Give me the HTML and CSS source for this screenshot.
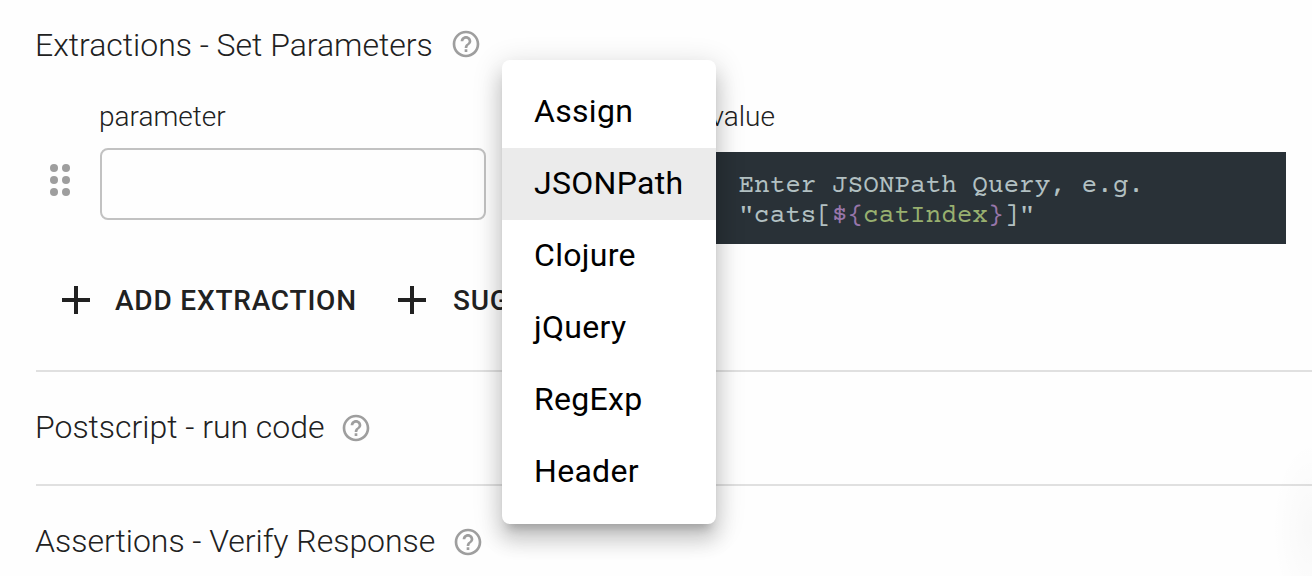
FILE: index.html
```html
<!DOCTYPE html>
<html lang="en">
<head>
<meta charset="utf-8">
<title>Extractions</title>
<link rel="stylesheet" href="styles.css">
</head>
<body>
<svg class="defs" aria-hidden="true">
  <symbol id="help" viewBox="0 0 24 24"><path d="M11 18h2v-2h-2v2zm1-16C6.480 2 2 6.480 2 12s4.480 10 10 10 10-4.480 10-10S17.520 2 12 2zm0 18c-4.410 0-8-3.590-8-8s3.590-8 8-8 8 3.590 8 8-3.590 8-8 8zm0-14c-2.210 0-4 1.790-4 4h2c0-1.100.9-2 2-2s2 .9 2 2c0 2-3 1.750-3 5h2c0-2.250 3-2.500 3-5 0-2.210-1.790-4-4-4z"/></symbol>
  <symbol id="plus" viewBox="0 0 28 28"><path d="M12 0h4v12h12v4H16v12h-4V16H0v-4h12z"/></symbol>
</svg>
<main class="page">
  <section class="section extractions">
    <h2 class="title"><span class="title-text w-extractions">Extractions - Set Parameters</span><svg class="help"><use href="#help"/></svg></h2>
    <div class="grid">
      <span class="label label-param">parameter</span>
      <span class="label label-value">value</span>
      <svg class="drag" viewBox="0 0 20 32"><circle cx="4" cy="4" r="4"/><circle cx="16" cy="4" r="4"/><circle cx="4" cy="16" r="4"/><circle cx="16" cy="16" r="4"/><circle cx="4" cy="28" r="4"/><circle cx="16" cy="28" r="4"/></svg>
      <input class="field" type="text" aria-label="parameter">
      <div class="editor"><div>Enter JSONPath Query, e.g.</div><div>"cats[<span class="brace">${</span><span class="var">catIndex</span><span class="brace">}</span>]"</div></div>
    </div>
    <div class="actions">
      <button class="action add"><svg class="plus"><use href="#plus"/></svg>ADD EXTRACTION</button>
      <button class="action suggest"><svg class="plus"><use href="#plus"/></svg>SUG</button>
    </div>
  </section>
  <section class="section">
    <h2 class="title"><span class="title-text w-postscript">Postscript - run code</span><svg class="help"><use href="#help"/></svg></h2>
  </section>
  <section class="section">
    <h2 class="title"><span class="title-text w-assertions">Assertions - Verify Response</span><svg class="help"><use href="#help"/></svg></h2>
  </section>
</main>
<ul class="menu">
  <li class="item">Assign</li>
  <li class="item selected">JSONPath</li>
  <li class="item">Clojure</li>
  <li class="item">jQuery</li>
  <li class="item">RegExp</li>
  <li class="item">Header</li>
</ul>
<div class="glow"></div>
</body>
</html>
```
FILE: styles.css
```css
* { box-sizing: border-box; }
body {
  margin: 0;
  height: 576px;
  overflow: hidden;
  position: relative;
  background: #fefefe;
  color: #212121;
  font-family: Roboto, sans-serif;
}
.defs { display: none; }
.page { padding-left: 36px; }
.section { height: 114px; border-bottom: 2px solid #e0e0e0; padding-top: 32px; }
.section:last-child { border-bottom: 0; }
.extractions { height: 372px; padding-top: 20px; }
.title {
  margin: 0;
  display: flex;
  align-items: center;
  height: 48px;
  font-size: 32px;
  font-weight: 300;
  line-height: 48px;
  letter-spacing: -0.02px;
  white-space: nowrap;
}
.title-text { flex: none; height: 50px; margin-left: -1px; }
.extractions .title-text { height: 46px; }
.w-extractions { width: 415px; }
.w-postscript { width: 305px; }
.w-assertions { width: 417px; }
.help { width: 32px; height: 32px; fill: #9e9e9e; }
.grid {
  display: grid;
  grid-template-columns: 64px 386px 16px 200px 584px;
  grid-template-rows: 40px 96px;
  padding-top: 28px;
}
.label { font-size: 28px; font-weight: 300; line-height: 42px; white-space: nowrap; }
.label-param { grid-column: 2; margin-left: -1px; }
.label-value { grid-column: 5; margin-left: 8.5px; }
.drag { grid-column: 1; grid-row: 2; width: 20px; height: 32px; margin: 28px 0 0 14px; fill: #9e9e9e; }
.field {
  grid-column: 2;
  grid-row: 2;
  margin-top: 12px;
  width: 386px;
  height: 72px;
  border: 2px solid #c2c2c2;
  border-radius: 8px;
  background: transparent;
}
.editor {
  grid-column: 5;
  grid-row: 2;
  margin-top: 16px;
  height: 92px;
  padding: 20px 0 0 36.5px;
  background: #293137;
  color: #b2c0c2;
  font: 26px/30px "Courier Prime", "Liberation Mono", monospace;
  white-space: pre;
}
.brace { color: #9876aa; }
.var { color: #98b06f; }
.actions { display: flex; padding: 38px 0 0 26px; }
.action {
  display: flex;
  align-items: center;
  height: 60px;
  padding: 2px 0 0;
  border: 0;
  background: none;
  color: #212121;
  font: 500 28px/58px Roboto, sans-serif;
  letter-spacing: 0.8px;
  white-space: nowrap;
}
.add { width: 336px; }
.plus { width: 28px; height: 28px; margin: 0 25px 2px 0; fill: #212121; }
.suggest .plus { margin-right: 27px; }
.menu {
  position: absolute;
  left: 502px;
  top: 60px;
  width: 214px;
  margin: 0;
  padding: 16px 0;
  list-style: none;
  border-radius: 8px;
  background: #fff;
  color: #000;
  box-shadow: 0 10px 10px -6px rgba(0,0,0,.2), 0 16px 20px 2px rgba(0,0,0,.14), 0 6px 28px 4px rgba(0,0,0,.12);
}
.item { height: 72px; padding-left: 32px; font-size: 32px; line-height: 71px; letter-spacing: 0.3px; }
.selected { background: #ebebeb; }
.glow {
  position: absolute;
  left: 1272px;
  top: 440px;
  width: 40px;
  height: 136px;
  background: radial-gradient(ellipse 40px 88px at 100% 65%, rgba(0,0,0,.025), transparent);
}
```
